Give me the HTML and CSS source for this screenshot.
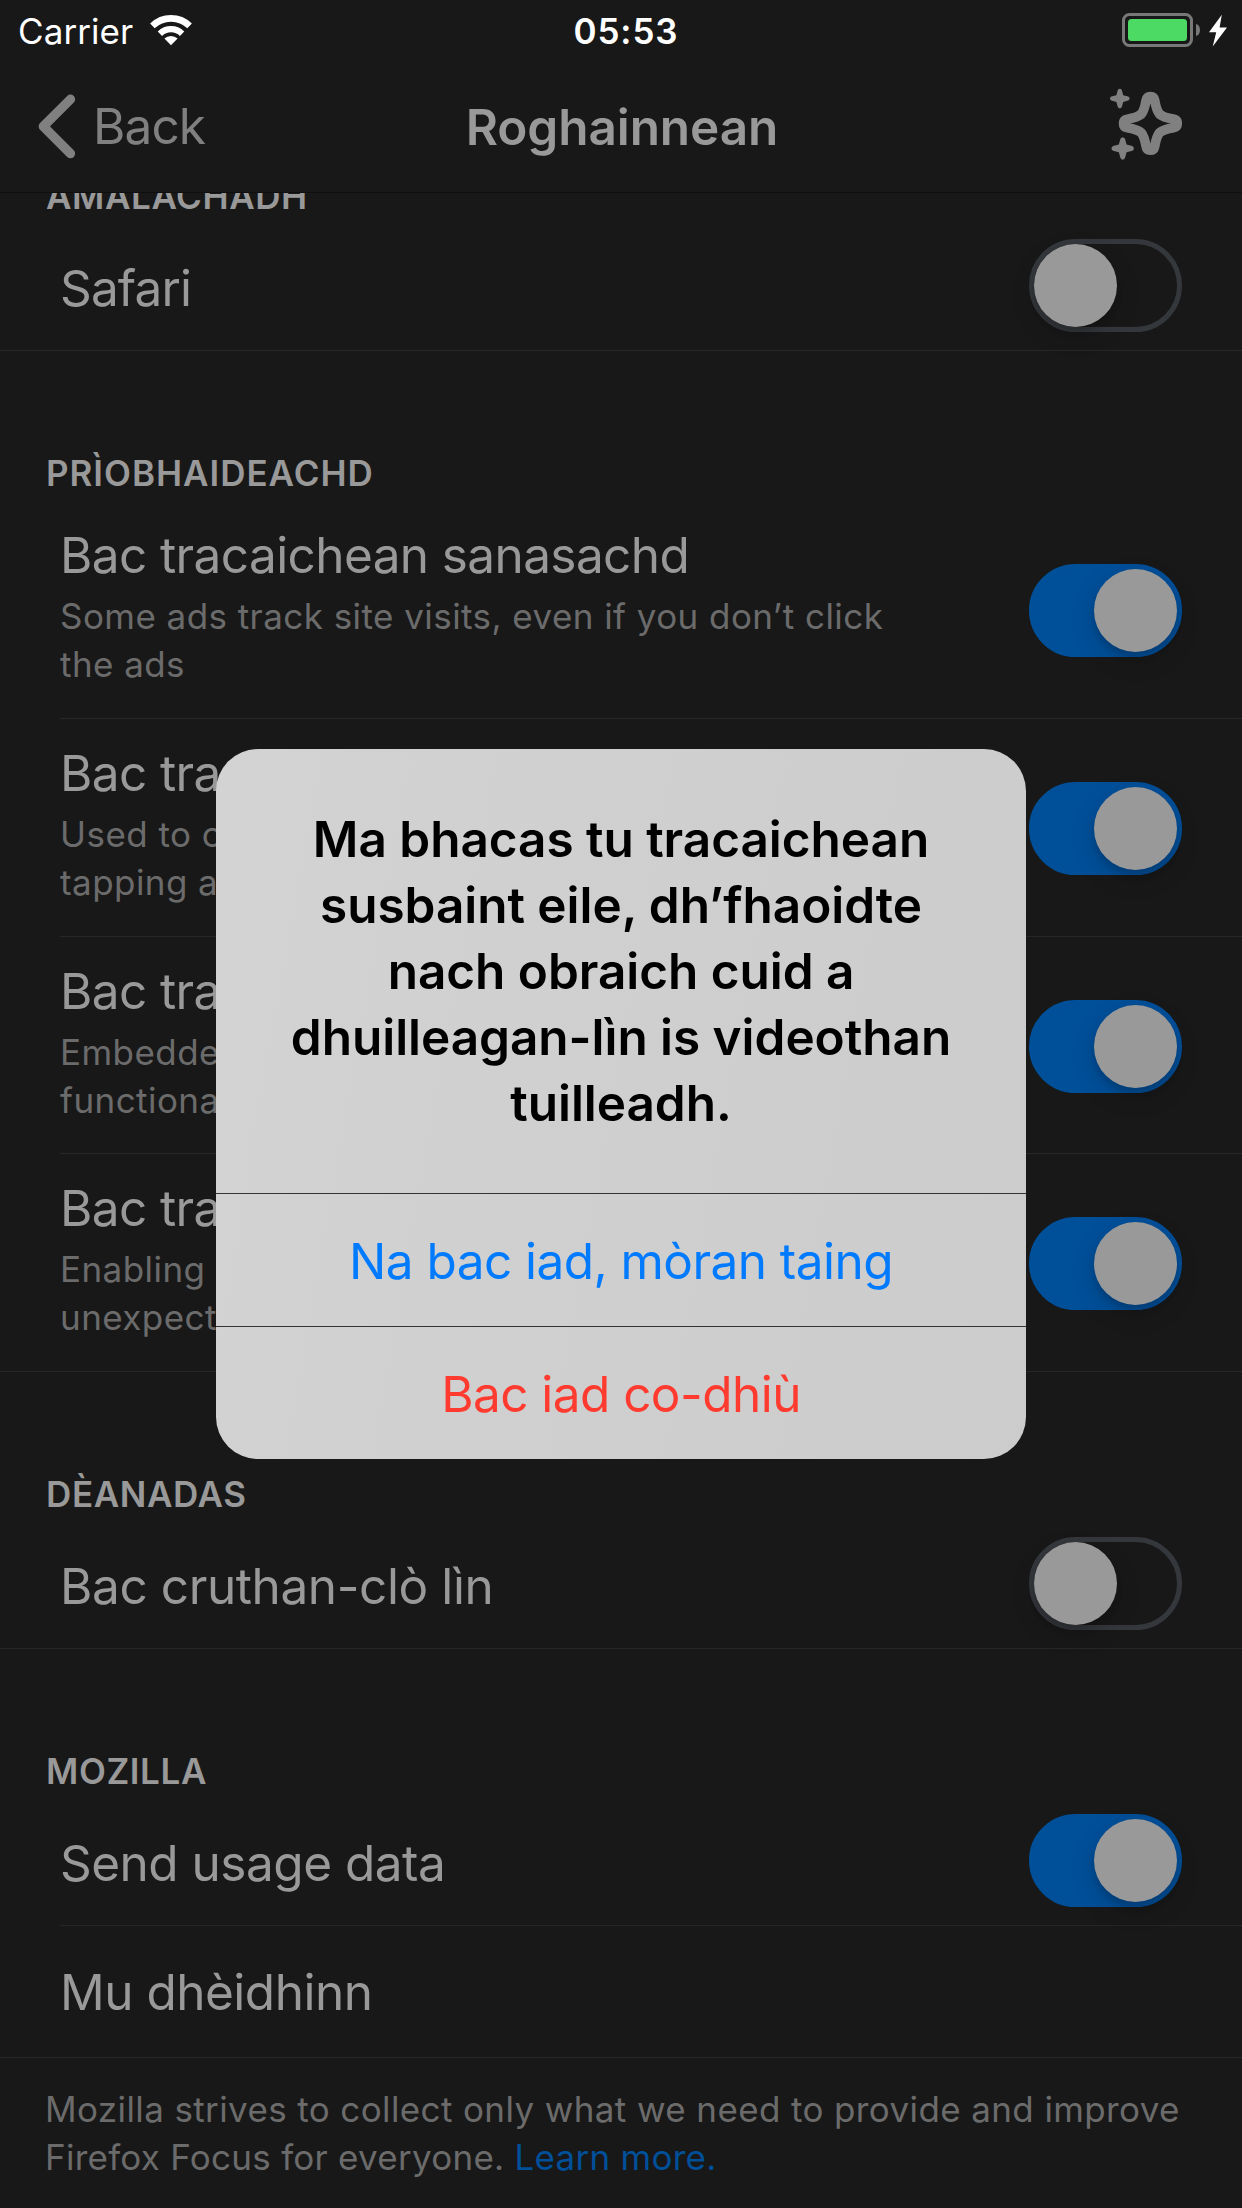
FILE: index.html
```html
<!DOCTYPE html>
<html lang="gd">
<head>
<meta charset="utf-8">
<title>Roghainnean</title>
<link rel="stylesheet" href="styles.css">
</head>
<body>
<div class="screen">
  <div class="status-bar">
    <div class="status-left">
      <span class="carrier">Carrier</span>
      <svg class="wifi" width="44" height="32" viewBox="0 0 44 32">
        <g fill="none" stroke="#fff">
          <path d="M3.4 11.9A26.8 26.8 0 0 1 40.6 11.9" stroke-width="6.6"/>
          <path d="M10.9 19.7A16 16 0 0 1 33.1 19.7" stroke-width="6.2"/>
        </g>
        <path d="M22 31.2L15.4 24.6A9.4 9.4 0 0 1 28.6 24.6Z" fill="#fff"/>
      </svg>
    </div>
    <span class="time">05:53</span>
    <div class="status-right">
      <svg width="106" height="36" viewBox="0 0 106 36">
        <rect x="1.5" y="2.5" width="68" height="31" rx="6" fill="none" stroke="#787878" stroke-width="3"/>
        <rect x="6" y="7" width="59" height="22" rx="3.5" fill="#4cd964"/>
        <path d="M74 12Q78 13 78 18T74 24Z" fill="#787878"/>
        <path d="M99.8 2.7L87 20.2L94.2 20.2L90.7 34.5L105 15.5L97.6 15.5Z" fill="#fff"/>
      </svg>
    </div>
  </div>

  <div class="nav-bar">
    <div class="back">
      <svg width="40" height="66" viewBox="0 0 40 66">
        <path d="M33.5 6.2L6.3 33.4L33.5 60.6" fill="none" stroke="#808080" stroke-width="9.3" stroke-linecap="round" stroke-linejoin="round"/>
      </svg>
      <span class="back-label">Back</span>
    </div>
    <h1 class="nav-title">Roghainnean</h1>
    <div class="tips">
      <svg width="72" height="72" viewBox="0 0 72 72">
        <path transform="translate(40.4 35.4)" d="M0-26.9Q3.6-26.9 4.3-23C5.6-15.5 6.6-12.3 9.2-9.2C12.3-6.6 15.5-5.6 23-4.3Q26.9-3.6 26.9 0Q26.9 3.6 23 4.3C15.5 5.6 12.3 6.6 9.2 9.2C6.6 12.3 5.6 15.5 4.3 23Q3.6 26.9 0 26.9Q-3.6 26.9-4.3 23C-5.6 15.5-6.6 12.3-9.2 9.2C-12.3 6.6-15.5 5.6-23 4.3Q-26.9 3.6-26.9 0Q-26.9-3.6-23-4.3C-15.5-5.6-12.3-6.6-9.2-9.2C-6.6-12.3-5.6-15.5-4.3-23Q-3.6-26.9 0-26.9Z" fill="none" stroke="#808080" stroke-width="9.6"/>
        <g fill="#808080">
          <path transform="translate(9.8 10.6)" d="M-2-8.5Q0-11.2 2-8.5L3.4-3.4L8.5-2Q11.2 0 8.5 2L3.4 3.4L2 8.5Q0 11.2-2 8.5L-3.4 3.4L-8.5 2Q-11.2 0-8.5-2L-3.4-3.4Z"/>
          <path transform="translate(12.7 60.4) scale(1.14)" d="M-2-8.5Q0-11.2 2-8.5L3.4-3.4L8.5-2Q11.2 0 8.5 2L3.4 3.4L2 8.5Q0 11.2-2 8.5L-3.4 3.4L-8.5 2Q-11.2 0-8.5-2L-3.4-3.4Z"/>
        </g>
      </svg>
    </div>
  </div>

  <main class="list">
    <h2 class="heading heading-first">AMALACHADH</h2>
    <div class="row last">
      <span class="label safari">Safari</span>
      <span class="switch"><i class="knob"></i></span>
    </div>

    <h2 class="heading heading-privacy">PRÌOBHAIDEACHD</h2>
    <div class="group">
      <div class="row tall">
        <div class="texts"><span class="label">Bac tracaichean sanasachd</span>
          <p class="desc">Some ads track site visits, even if you don’t click<br>the ads</p></div>
        <span class="switch on"><i class="knob"></i></span>
      </div>
      <div class="row tall">
        <div class="texts"><span class="label">Bac tracaichean anailiseachd</span>
          <p class="desc">Used to collect, analyze and measure activities like<br>tapping and scrolling</p></div>
        <span class="switch on"><i class="knob"></i></span>
      </div>
      <div class="row tall short">
        <div class="texts"><span class="label">Bac tracaichean sòisealta</span>
          <p class="desc">Embedded on sites to track your visits and to display<br>functionality like share buttons</p></div>
        <span class="switch on"><i class="knob"></i></span>
      </div>
      <div class="row tall last">
        <div class="texts"><span class="label">Bac tracaichean susbaint eile</span>
          <p class="desc">Enabling may cause some pages to behave<br>unexpectedly</p></div>
        <span class="switch on"><i class="knob"></i></span>
      </div>
    </div>

    <h2 class="heading heading-performance">DÈANADAS</h2>
    <div class="row last">
      <span class="label fonts">Bac cruthan-clò lìn</span>
      <span class="switch"><i class="knob"></i></span>
    </div>

    <h2 class="heading heading-mozilla">MOZILLA</h2>
    <div class="row">
      <span class="label">Send usage data</span>
      <span class="switch on"><i class="knob"></i></span>
    </div>
    <div class="row last plain">
      <span class="label">Mu dhèidhinn</span>
    </div>
    <p class="footer"><span class="footer-line">Mozilla strives to collect only what we need to provide and improve</span><br>Firefox Focus for everyone. <a class="link">Learn more.</a></p>
  </main>

  <div class="alert" role="alertdialog">
    <p class="alert-title">Ma bhacas tu tracaichean<br>susbaint eile, dh’fhaoidte<br>nach obraich cuid a<br>dhuilleagan-lìn is videothan<br>tuilleadh.</p>
    <button class="action">Na bac iad, mòran taing</button>
    <button class="action destructive">Bac iad co-dhiù</button>
  </div>
</div>
</body>
</html>
```
FILE: styles.css
```css
* { box-sizing: border-box; }

body {
  margin: 0;
  background: #181818;
  color: #999;
  font-family: Inter, "Liberation Sans", sans-serif;
}

h1, h2, p { margin: 0; }

.screen {
  position: relative;
  display: flex;
  flex-direction: column;
  width: 1242px;
  height: 2208px;
  overflow: hidden;
}

/* Status bar */
.status-bar {
  display: grid;
  grid-template-columns: 1fr auto 1fr;
  height: 60px;
  line-height: 62px;
  font-size: 35px;
  color: #fff;
}

.status-left { display: flex; padding-left: 18px; }
.carrier { width: 131px; letter-spacing: 0.08px; }
.wifi { margin-top: 14px; }
.time { padding-left: 10px; font-weight: 600; letter-spacing: 0.9px; }
.status-right { display: flex; justify-content: flex-end; padding: 12px 14px 0 0; }

/* Navigation bar */
.nav-bar {
  display: grid;
  grid-template-columns: 1fr auto 1fr;
  align-items: center;
  height: 133px;
  border-bottom: 1px solid #0f0f0f;
  font-size: 49.5px;
}

.back { display: flex; align-items: center; gap: 16px; padding-left: 37px; color: #808080; }
.back-label { letter-spacing: -0.9px; line-height: 60px; }
.nav-title { font-size: 49.5px; font-weight: 600; line-height: 60px; letter-spacing: -0.08px; padding: 1px 0 0 2px; }
.tips { display: flex; justify-content: flex-end; padding: 0 60px 4px 0; }

/* Settings list */
.list { flex: 1; overflow: hidden; }

.heading {
  padding-left: 46px;
  font-size: 35px;
  font-weight: 600;
  line-height: 46px;
  letter-spacing: 0.6px;
}
.heading-first { margin-top: -20px; }
.heading-privacy { margin-top: 99px; padding-bottom: 5px; letter-spacing: 0.98px; }
.heading-performance { margin-top: 99px; }
.heading-mozilla { margin-top: 99px; }

.row {
  display: flex;
  align-items: center;
  justify-content: space-between;
  height: 132px;
  margin-left: 60px;
  padding-right: 60px;
  border-bottom: 1px solid #272727;
}
.row.last { margin-left: 0; padding-left: 60px; }
.row.tall { height: 218px; }
.row.short { height: 217px; }

.label {
  display: block;
  font-size: 49.5px;
  line-height: 60px;
  letter-spacing: -0.5px;
  white-space: nowrap;
}
.row > .label { padding-top: 6px; }
.row.plain > .label { padding-top: 1px; }
.label.safari { letter-spacing: -0.85px; }
.label.fonts { letter-spacing: -0.4px; }

.desc {
  margin-top: 7px;
  font-size: 35px;
  line-height: 48px;
  letter-spacing: 0.44px;
  color: #6b6b6b;
  white-space: nowrap;
}
.texts { align-self: flex-start; width: 860px; padding-top: 24px; }
.texts .label { letter-spacing: -0.6px; }

.switch {
  display: flex;
  flex: none;
  width: 153px;
  height: 93px;
  margin-top: 2px;
  border: 5px solid #34373c;
  border-radius: 47px;
}
.switch.on { justify-content: flex-end; border-color: #004f99; background: #004f99; }
.knob {
  width: 83px;
  height: 83px;
  border-radius: 50%;
  background: #999;
  box-shadow: 0 9px 24px rgba(0, 0, 0, 0.15), 0 5px 6px rgba(0, 0, 0, 0.13);
}

.footer {
  padding: 27px 0 0 45px;
  font-size: 35px;
  line-height: 48px;
  letter-spacing: 0.26px;
  color: #6b6b6b;
  white-space: nowrap;
}
.footer-line { letter-spacing: 0.38px; }
.link { color: #004f99; }

/* Alert */
.alert {
  position: absolute;
  left: 216px;
  top: 749px;
  display: flex;
  flex-direction: column;
  width: 810px;
  height: 710px;
  border-radius: 42px;
  background: linear-gradient(100deg, #d3d3d3, #cfcfcf 50%, #cccccc);
  overflow: hidden;
  color: #000;
}
.alert-title {
  height: 444px;
  padding-top: 57px;
  text-align: center;
  font-size: 49.5px;
  font-weight: 600;
  line-height: 66px;
  letter-spacing: -0.04px;
}
.action {
  height: 133px;
  padding: 1px 0 0;
  border: 0;
  border-top: 1px solid #333;
  background: none;
  color: #007aff;
  font: 400 49.5px/60px Inter, "Liberation Sans", sans-serif;
  letter-spacing: -0.55px;
}
.action.destructive { color: #ff3b30; }
```
